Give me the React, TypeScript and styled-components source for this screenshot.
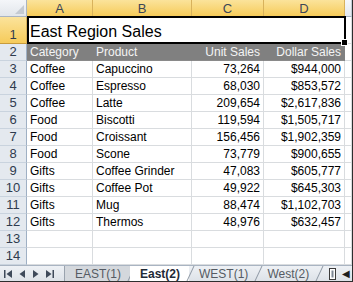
import React from 'react'
import styled, { createGlobalStyle, css } from 'styled-components'

const GlobalStyle = createGlobalStyle`
	html, body {
		margin: 0;
		padding: 0;
		background: #ffffff;
	}
	body {
		font-family: "Liberation Sans", Arial, sans-serif;
		overflow: hidden;
	}
`

const Window = styled.div`
	width: 353px;
	height: 282px;
	box-sizing: border-box;
	border-right: 1px solid #2e2e2e;
	border-bottom: 1px solid #2e2e2e;
	display: flex;
	flex-direction: column;
	overflow: hidden;
`

const Sheet = styled.div`
	display: grid;
	grid-template-columns: 27px 66px 99px 72px 81px 1fr;
	grid-template-rows: 17px 27px repeat(13, 17px);
	height: 265px;
`

const selectedHead = css`
	background: linear-gradient(#fbe39b, #f6cb5a);
	border-right-color: #d8b25c;
	border-bottom-color: #c79b3c;
`

const Corner = styled.div`
	position: relative;
	box-sizing: border-box;
	background: linear-gradient(#f4f6f9, #e2e6eb);
	border-right: 1px solid #a9b4c2;
	border-bottom: 1px solid #a9b4c2;
	&::after {
		content: '';
		position: absolute;
		right: 2px;
		bottom: 2px;
		width: 0;
		height: 0;
		border-left: 9px solid transparent;
		border-bottom: 9px solid #c4cad2;
	}
`

const ColHead = styled.div<{ selected?: boolean }>`
	box-sizing: border-box;
	display: flex;
	align-items: center;
	justify-content: center;
	font-size: 13px;
	color: #3d4656;
	background: linear-gradient(#f6f8fb, #e3e8ee);
	border-right: 1px solid #c3ccd7;
	border-bottom: 1px solid #a9b4c2;
	padding-top: 1px;
	${({ selected }) => selected && selectedHead}
`

const RowHead = styled.div<{ selected?: boolean }>`
	box-sizing: border-box;
	display: flex;
	align-items: flex-end;
	justify-content: center;
	padding-bottom: 1px;
	font-size: 13px;
	color: #2f3b4e;
	background: #e4e9ef;
	border-right: 1px solid #9fb0c4;
	border-bottom: 1px solid #c9d3de;
	${({ selected }) => selected && selectedHead}
`

const Cell = styled.div<{ num?: boolean; head?: boolean }>`
	box-sizing: border-box;
	display: flex;
	align-items: flex-end;
	justify-content: ${({ num }) => (num ? 'flex-end' : 'flex-start')};
	padding: 0 3px 1px 3px;
	font-size: 12px;
	color: #000;
	white-space: nowrap;
	border-right: 1px solid #d9dcdf;
	border-bottom: 1px solid #d9dcdf;
	${({ head }) => head && css`
		background: #808080;
		color: #f4f4f4;
		border-right-color: #808080;
		border-bottom-color: #8a8a8a;
	`}
`

const TitleCell = styled.div`
	position: relative;
	grid-column: 2 / span 4;
	box-sizing: border-box;
	border: 2px solid #000;
	display: flex;
	align-items: flex-end;
	padding: 0 0 1px 1px;
	font-size: 16px;
	color: #000;
	margin: -1px -1px 0 0;
`

const FillHandle = styled.div`
	position: absolute;
	right: -4px;
	bottom: -4px;
	width: 5px;
	height: 5px;
	background: #000;
	border: 1px solid #fff;
`

const TabBar = styled.div`
	display: flex;
	align-items: stretch;
	height: 16px;
	background: linear-gradient(#eef1f5, #dde2e8);
	border-top: 1px solid #a9b4c2;
	font-size: 12px;
	color: #4a4f57;
`

const NavBox = styled.div`
	display: flex;
	align-items: center;
	gap: 6px;
	padding-left: 4px;
	width: 60px;
	border-right: 1px solid #9aa3ae;
`

const NavBtn = styled.svg`
	width: 8px;
	height: 8px;
	fill: #3f4a5a;
`

const Tab = styled.div<{ active?: boolean; first?: boolean }>`
	position: relative;
	display: flex;
	align-items: center;
	padding: 0 9px 0 ${({ first }) => (first ? 10 : 10)}px;
	background: ${({ first }) => (first ? '#d4d8dd' : 'transparent')};
	color: #555b63;
	${({ active }) => active && css`
		background: #ffffff;
		color: #1f2a37;
		font-weight: bold;
	`}
	&::after {
		content: '';
		position: absolute;
		right: -2px;
		top: 0;
		width: 1px;
		height: 100%;
		background: #8d97a3;
		transform: skewX(-25deg);
	}
`

const Spacer = styled.div`
	flex: 1;
`

const InsertIcon = styled.div`
	display: flex;
	align-items: center;
	padding: 0 6px 0 0;
`

const ScrollLeft = styled.div`
	display: flex;
	align-items: center;
	padding-right: 2px;
	font-size: 10px;
	color: #1d1d1d;
`

const cols = ['A', 'B', 'C', 'D']

const rows: [string, string, string, string][] = [
	['Coffee', 'Capuccino', '73,264', '$944,000'],
	['Coffee', 'Espresso', '68,030', '$853,572'],
	['Coffee', 'Latte', '209,654', '$2,617,836'],
	['Food', 'Biscotti', '119,594', '$1,505,717'],
	['Food', 'Croissant', '156,456', '$1,902,359'],
	['Food', 'Scone', '73,779', '$900,655'],
	['Gifts', 'Coffee Grinder', '47,083', '$605,777'],
	['Gifts', 'Coffee Pot', '49,922', '$645,303'],
	['Gifts', 'Mug', '88,474', '$1,102,703'],
	['Gifts', 'Thermos', '48,976', '$632,457'],
]

const App = () => (
	<>
		<GlobalStyle />
		<Window>
			<Sheet>
				<Corner />
				{cols.map(c => <ColHead key={c} selected>{c}</ColHead>)}
				<ColHead />

				<RowHead selected>1</RowHead>
				<TitleCell>
					East Region Sales
					<FillHandle />
				</TitleCell>
				<Cell />

				<RowHead>2</RowHead>
				<Cell head>Category</Cell>
				<Cell head>Product</Cell>
				<Cell head num>Unit Sales</Cell>
				<Cell head num>Dollar Sales</Cell>
				<Cell />

				{rows.map((r, i) => (
					<React.Fragment key={i}>
						<RowHead>{i + 3}</RowHead>
						<Cell>{r[0]}</Cell>
						<Cell>{r[1]}</Cell>
						<Cell num>{r[2]}</Cell>
						<Cell num>{r[3]}</Cell>
						<Cell />
					</React.Fragment>
				))}

				{[13, 14].map(n => (
					<React.Fragment key={n}>
						<RowHead>{n}</RowHead>
						<Cell /><Cell /><Cell /><Cell /><Cell />
					</React.Fragment>
				))}
			</Sheet>

			<TabBar>
				<NavBox>
					<NavBtn viewBox="0 0 8 8"><rect x="0" y="0" width="1.5" height="8" /><path d="M8 0 L2.5 4 L8 8 Z" /></NavBtn>
					<NavBtn viewBox="0 0 8 8"><path d="M7 0 L1.5 4 L7 8 Z" /></NavBtn>
					<NavBtn viewBox="0 0 8 8"><path d="M1 0 L6.5 4 L1 8 Z" /></NavBtn>
					<NavBtn viewBox="0 0 8 8"><path d="M0 0 L5.5 4 L0 8 Z" /><rect x="6.5" y="0" width="1.5" height="8" /></NavBtn>
				</NavBox>
				<Tab first>EAST(1)</Tab>
				<Tab active>East(2)</Tab>
				<Tab>WEST(1)</Tab>
				<Tab>West(2)</Tab>
				<Spacer />
				<InsertIcon>
					<svg width="7" height="12" viewBox="0 0 7 12">
						<rect x="0.5" y="0.5" width="6" height="11" fill="#fff" stroke="#3b3b3b" />
						<rect x="2.5" y="2.5" width="2" height="7" fill="#7d8794" />
					</svg>
				</InsertIcon>
				<ScrollLeft>◀</ScrollLeft>
			</TabBar>
		</Window>
	</>
)

export default App
